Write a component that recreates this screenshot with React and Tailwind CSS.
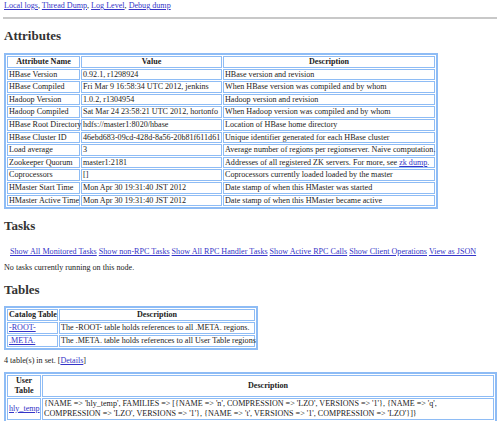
import React from 'react';

const attrs = [
  ['HBase Version', '0.92.1, r1298924', 'HBase version and revision'],
  ['HBase Compiled', 'Fri Mar 9 16:58:34 UTC 2012, jenkins', 'When HBase version was compiled and by whom'],
  ['Hadoop Version', '1.0.2, r1304954', 'Hadoop version and revision'],
  ['Hadoop Compiled', 'Sat Mar 24 23:58:21 UTC 2012, hortonfo', 'When Hadoop version was compiled and by whom'],
  ['HBase Root Directory', 'hdfs://master1:8020/hbase', 'Location of HBase home directory'],
  ['HBase Cluster ID', '46ebd683-09cd-428d-8a56-20b81f611d61', 'Unique identifier generated for each HBase cluster'],
  ['Load average', '3', 'Average number of regions per regionserver. Naive computation.'],
  ['Zookeeper Quorum', 'master1:2181', 'zk'],
  ['Coprocessors', '[]', 'Coprocessors currently loaded loaded by the master'],
  ['HMaster Start Time', 'Mon Apr 30 19:31:40 JST 2012', 'Date stamp of when this HMaster was started'],
  ['HMaster Active Time', 'Mon Apr 30 19:31:40 JST 2012', 'Date stamp of when this HMaster became active'],
];

const taskLinks = [
  'Show All Monitored Tasks',
  'Show non-RPC Tasks',
  'Show All RPC Handler Tasks',
  'Show Active RPC Calls',
  'Show Client Operations',
  'View as JSON',
];

const A = ({ children }) => <a href="#" className="text-[#3535c8] underline">{children}</a>;

const td = 'border border-[#8ebcf5] px-[1px] py-0 whitespace-nowrap text-left';
const th = 'border border-[#8ebcf5] px-[1px] py-0 whitespace-nowrap font-bold text-center';
const table = 'border-2 border-[#8ebcf5] border-separate border-spacing-[1px] table-fixed';

export default function App() {
  return (
    <div className="w-[500px] h-[421px] overflow-hidden bg-white px-[4px] text-[8.1px] leading-[9.6px] text-[#222]" style={{ fontFamily: '"Liberation Serif", "Times New Roman", serif' }}>
      <div className="pt-[1px] leading-[10px]">
        <A>Local logs</A>, <A>Thread Dump</A>, <A>Log Level</A>, <A>Debug dump</A>
      </div>
      <div className="mt-[6px] -mx-[1px] border-t-2 border-[#c8c8c8]" />

      <h2 className="mt-[9px] text-[13px] leading-[15px] font-bold text-[#333]">Attributes</h2>
      <table className={`${table} mt-[10px] w-[434px]`}>
        <thead>
          <tr>
            <th className={`${th} w-[73px]`}>Attribute Name</th>
            <th className={`${th} w-[141px]`}>Value</th>
            <th className={th}>Description</th>
          </tr>
        </thead>
        <tbody>
          {attrs.map(([name, value, desc]) => (
            <tr key={name}>
              <td className={td}>{name}</td>
              <td className={td}>{value}</td>
              <td className={td}>
                {desc === 'zk' ? (
                  <>Addresses of all registered ZK servers. For more, see <A>zk dump</A>.</>
                ) : desc}
              </td>
            </tr>
          ))}
        </tbody>
      </table>

      <h2 className="mt-[9px] text-[13px] leading-[15px] font-bold text-[#333]">Tasks</h2>
      <div className="mt-[14px] pl-[6px] leading-[10px] whitespace-nowrap">
        {taskLinks.map((l, i) => (
          <React.Fragment key={l}>
            {i > 0 && ' '}
            <A>{l}</A>
          </React.Fragment>
        ))}
      </div>
      <p className="mt-[6px] leading-[10px]">No tasks currently running on this node.</p>

      <h2 className="mt-[9px] text-[13px] leading-[15px] font-bold text-[#333]">Tables</h2>
      <table className={`${table} mt-[9px] w-[254px]`}>
        <thead>
          <tr>
            <th className={`${th} w-[51px] leading-[10px]`}>Catalog Table</th>
            <th className={`${th} leading-[10px]`}>Description</th>
          </tr>
        </thead>
        <tbody>
          <tr>
            <td className={`${td} leading-[10px]`}><A>-ROOT-</A></td>
            <td className={`${td} leading-[10px]`}>The -ROOT- table holds references to all .META. regions.</td>
          </tr>
          <tr>
            <td className={`${td} leading-[10px]`}><A>.META.</A></td>
            <td className={`${td} leading-[10px]`}>The .META. table holds references to all User Table regions</td>
          </tr>
        </tbody>
      </table>

      <p className="mt-[6px] leading-[10px]">4 table(s) in set. [<A>Details</A>]</p>

      <table className={`${table} mt-[6px] w-[493px]`}>
        <thead>
          <tr>
            <th className="border border-[#8ebcf5] px-[1px] py-0 font-bold text-center w-[34px] leading-[10px]">User<br />Table</th>
            <th className="border border-[#8ebcf5] px-[1px] py-0 font-bold text-center leading-[10px]">Description</th>
          </tr>
        </thead>
        <tbody>
          <tr>
            <td className={`${td} leading-[10px]`}><A>hly_temp</A></td>
            <td className="border border-[#8ebcf5] px-[1px] py-0 text-left leading-[10px]">
              {"{NAME => 'hly_temp', FAMILIES => [{NAME => 'n', COMPRESSION => 'LZO', VERSIONS => '1'}, {NAME => 'q', "}
              <br />
              {"COMPRESSION => 'LZO', VERSIONS => '1'}, {NAME => 't', VERSIONS => '1', COMPRESSION => 'LZO'}]}"}
            </td>
          </tr>
        </tbody>
      </table>
    </div>
  );
}
